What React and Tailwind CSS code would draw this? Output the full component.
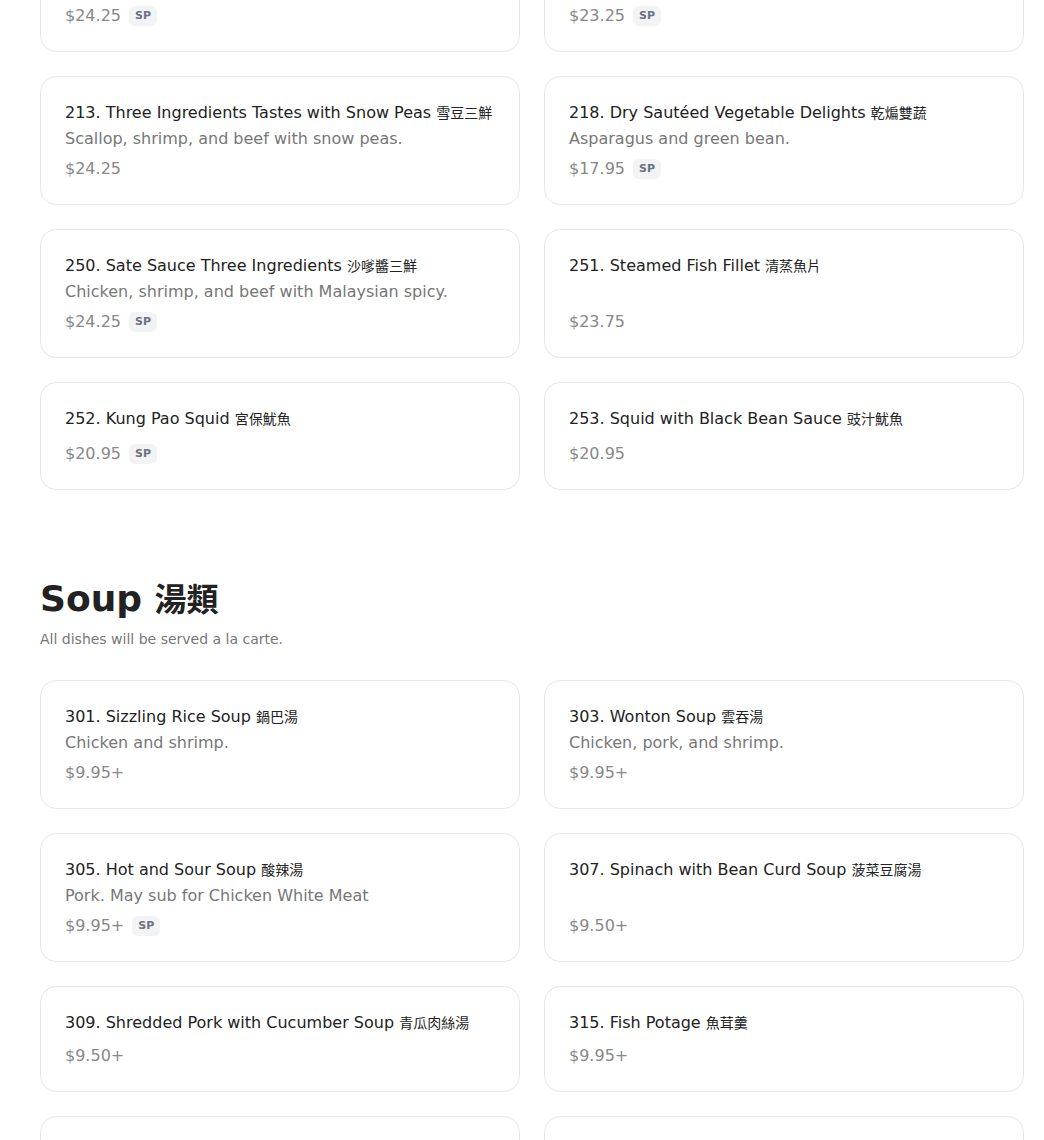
const seafood = [
  { name: '210. Mongolian Three Ingredients', zh: '蒙古三鮮', desc: 'Scallop, shrimp, and beef.', price: '$24.25', sp: true },
  { name: '211. Pepper Salt Three Ingredients', zh: '椒鹽三鮮', desc: 'Scallop, shrimp, and squid.', price: '$23.25', sp: true },
  { name: '213. Three Ingredients Tastes with Snow Peas', zh: '雪豆三鮮', desc: 'Scallop, shrimp, and beef with snow peas.', price: '$24.25' },
  { name: '218. Dry Sautéed Vegetable Delights', zh: '乾煸雙蔬', desc: 'Asparagus and green bean.', price: '$17.95', sp: true },
  { name: '250. Sate Sauce Three Ingredients', zh: '沙嗲醬三鮮', desc: 'Chicken, shrimp, and beef with Malaysian spicy.', price: '$24.25', sp: true },
  { name: '251. Steamed Fish Fillet', zh: '清蒸魚片', price: '$23.75' },
  { name: '252. Kung Pao Squid', zh: '宮保魷魚', price: '$20.95', sp: true },
  { name: '253. Squid with Black Bean Sauce', zh: '豉汁魷魚', price: '$20.95' },
]

const soups = [
  { name: '301. Sizzling Rice Soup', zh: '鍋巴湯', desc: 'Chicken and shrimp.', price: '$9.95+' },
  { name: '303. Wonton Soup', zh: '雲吞湯', desc: 'Chicken, pork, and shrimp.', price: '$9.95+' },
  { name: '305. Hot and Sour Soup', zh: '酸辣湯', desc: 'Pork. May sub for Chicken White Meat', price: '$9.95+', sp: true },
  { name: '307. Spinach with Bean Curd Soup', zh: '菠菜豆腐湯', price: '$9.50+' },
  { name: '309. Shredded Pork with Cucumber Soup', zh: '青瓜肉絲湯', price: '$9.50+' },
  { name: '315. Fish Potage', zh: '魚茸羹', price: '$9.95+' },
  { name: '316. Seafood Soup', zh: '海鮮湯', price: '$10.95+' },
  { name: '318. Egg Flower Soup', zh: '蛋花湯', price: '$8.50+' },
]

function Dish({ item }) {
  // spacer keeps the price row where the menu had it
  const spacer = item.desc ? 'flex-1 min-h-[7px]' : item.sp ? 'flex-1 min-h-[11.5px]' : 'flex-1 min-h-[9.5px]'
  return (
    <div className="rounded-2xl border border-[#e5e7eb] bg-white p-6 flex flex-col">
      <h4 className="text-base leading-6 text-[#222] whitespace-nowrap">
        {item.name} <span className="text-[14px]">{item.zh}</span>
      </h4>
      {item.desc && <p className="mt-[2px] text-base leading-6 text-[#777]">{item.desc}</p>}
      <div className={spacer} />
      <div className="flex items-center gap-2 h-[22px]">
        <span className="text-base text-[#888]">{item.price}</span>
        {item.sp && (
          <span className="rounded-md bg-[#f1f3f5] px-[6px] py-[3px] text-[11px] leading-[14px] font-bold text-[#6b7280]">SP</span>
        )}
      </div>
    </div>
  )
}

export default function App() {
  return (
    <div className="bg-white min-h-screen font-['DejaVu_Sans','Noto_Sans_CJK_TC',sans-serif] overflow-hidden">
      <div className="w-[984px] ml-10 -mt-[77px]">
        {/* seafood, tail of section */}
        <section className="pb-[89.5px]">
          <div className="grid grid-cols-2 gap-6">
            {seafood.map(item => <Dish key={item.name} item={item} />)}
          </div>
        </section>

        {/* soup */}
        <section>
          <h2 className="text-4xl leading-10 font-bold text-[#222]">
            Soup <span className="text-[32px]">湯類</span>
          </h2>
          <p className="mt-[9px] text-sm leading-5 text-[#777]">All dishes will be served a la carte.</p>
          <div className="mt-[31px] grid grid-cols-2 gap-6">
            {soups.map(item => <Dish key={item.name} item={item} />)}
          </div>
        </section>
      </div>
    </div>
  )
}
